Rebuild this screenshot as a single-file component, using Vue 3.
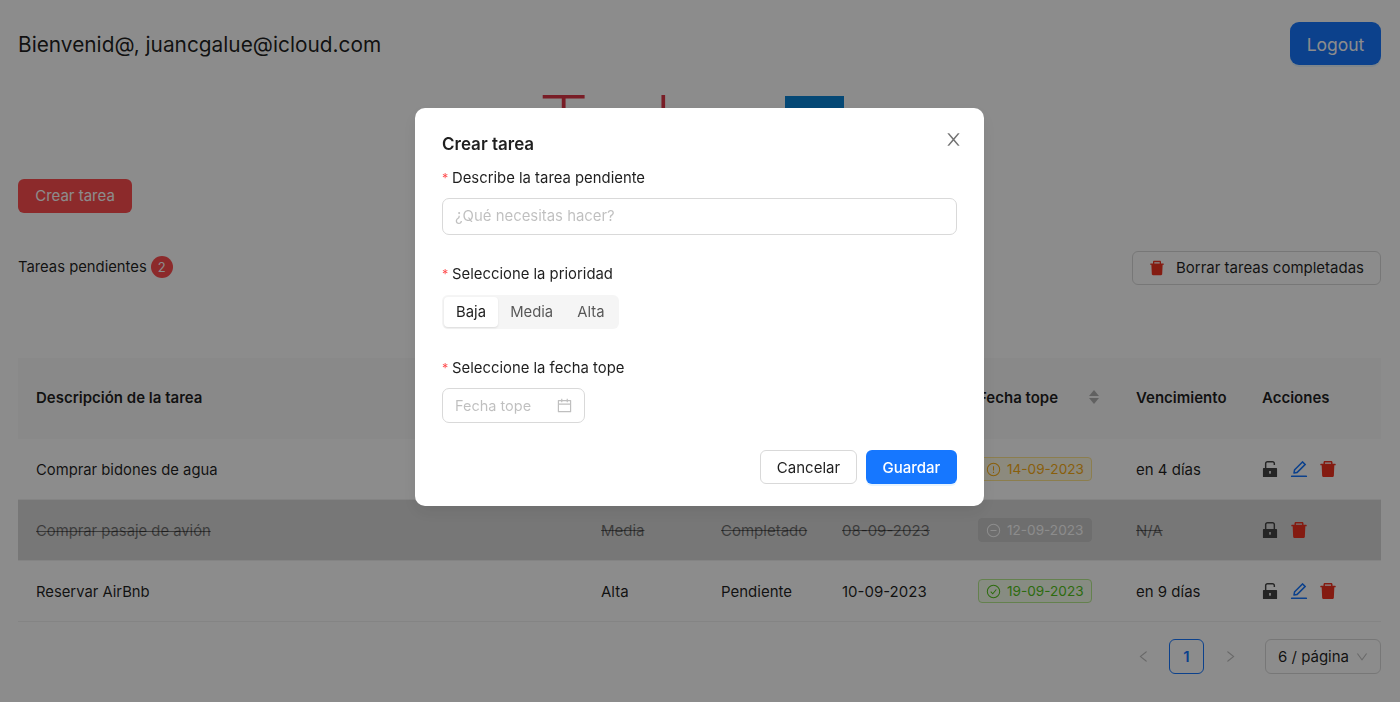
<script setup>
import { ref } from 'vue'

const icons = {
  del: 'M864 256H736v-80c0-35.3-28.7-64-64-64H352c-35.3 0-64 28.7-64 64v80H160c-17.7 0-32 14.3-32 32v32c0 4.4 3.6 8 8 8h60.4l24.7 523c1.6 34.1 29.8 61 63.9 61h454c34.2 0 62.3-26.8 63.9-61l24.7-523H888c4.4 0 8-3.6 8-8v-32c0-17.7-14.3-32-32-32zm-200 0H360v-72h304v72z',
  edit: 'M257.7 752c2 0 4-.2 6-.5L431.9 722c2-.4 3.9-1.3 5.3-2.8l423.9-423.9a9.96 9.96 0 0 0 0-14.1L694.9 114.9c-1.9-1.9-4.4-2.9-7.1-2.9s-5.2 1-7.1 2.9L256.8 538.8c-1.5 1.5-2.4 3.3-2.8 5.3l-29.5 168.2a33.5 33.5 0 0 0 9.4 29.8c6.6 6.4 14.9 9.9 23.8 9.9zm67.4-174.4L687.8 215l73.3 73.3-362.7 362.6-88.9 15.7 15.6-89zM880 836H144c-17.7 0-32 14.3-32 32v36c0 4.4 3.6 8 8 8h784c4.4 0 8-3.6 8-8v-36c0-17.7-14.3-32-32-32z',
  lock: 'M832 464h-68V240c0-70.7-57.3-128-128-128H388c-70.7 0-128 57.3-128 128v224h-68c-17.7 0-32 14.3-32 32v384c0 17.7 14.3 32 32 32h640c17.7 0 32-14.3 32-32V496c0-17.7-14.3-32-32-32zM540 701v53c0 4.4-3.6 8-8 8h-40c-4.4 0-8-3.6-8-8v-53a48.01 48.01 0 1 1 56 0zm152-237H332V240c0-30.9 25.1-56 56-56h248c30.9 0 56 25.1 56 56v224z',
  unlock: 'M832 464H332V240c0-30.9 25.1-56 56-56h248c30.9 0 56 25.1 56 56v68c0 4.4 3.6 8 8 8h56c4.4 0 8-3.6 8-8v-68c0-70.7-57.3-128-128-128H388c-70.7 0-128 57.3-128 128v224h-68c-17.7 0-32 14.3-32 32v384c0 17.7 14.3 32 32 32h640c17.7 0 32-14.3 32-32V496c0-17.7-14.3-32-32-32zM540 701v53c0 4.4-3.6 8-8 8h-40c-4.4 0-8-3.6-8-8v-53a48.01 48.01 0 1 1 56 0z',
  calendar: 'M880 184H712v-64c0-4.4-3.6-8-8-8h-56c-4.4 0-8 3.6-8 8v64H384v-64c0-4.4-3.6-8-8-8h-56c-4.4 0-8 3.6-8 8v64H144c-17.7 0-32 14.3-32 32v664c0 17.7 14.3 32 32 32h736c17.7 0 32-14.3 32-32V216c0-17.7-14.3-32-32-32zm-40 656H184V460h656v380zM184 392V256h128v48c0 4.4 3.6 8 8 8h56c4.4 0 8-3.6 8-8v-48h256v48c0 4.4 3.6 8 8 8h56c4.4 0 8-3.6 8-8v-48h128v136H184z',
  close: 'M563.8 512l262.5-312.9c4.4-5.2.7-13.1-6.1-13.1h-79.8c-4.7 0-9.2 2.1-12.3 5.7L511.6 449.8 295.1 191.7c-3-3.6-7.5-5.7-12.3-5.7H203c-6.8 0-10.5 7.9-6.1 13.1L459.4 512 196.9 824.9A7.95 7.95 0 0 0 203 838h79.8c4.7 0 9.2-2.1 12.3-5.7l216.5-258.1 216.5 258.1c3 3.6 7.5 5.7 12.3 5.7h79.8c6.8 0 10.5-7.9 6.1-13.1L563.8 512z',
  left: 'M724 218.3V141c0-6.7-7.7-10.4-12.9-6.3L260.3 486.8a31.86 31.86 0 0 0 0 50.3l450.8 352.1c5.3 4.1 12.9.4 12.9-6.3v-77.3c0-4.9-2.3-9.6-6.1-12.6l-360-281 360-281.1c3.8-3 6.1-7.7 6.1-12.6z',
  right: 'M765.7 486.8L314.9 134.7A7.97 7.97 0 0 0 302 141v77.3c0 4.9 2.3 9.6 6.1 12.6l360 281.1-360 281.1c-3.9 3-6.1 7.7-6.1 12.6V883c0 6.7 7.7 10.4 12.9 6.3l450.8-352.1a31.96 31.96 0 0 0 0-50.4z',
  down: 'M884 256h-75c-5.1 0-9.9 2.5-12.9 6.6L512 654.2 227.9 262.6c-3-4.1-7.8-6.6-12.9-6.6h-75c-6.5 0-10.3 7.4-6.5 12.7l352.6 486.1c12.8 17.6 39 17.6 51.7 0l352.6-486.1c3.9-5.3.1-12.7-6.4-12.7z'
}

const headers = ['Descripción de la tarea', 'Prioridad', 'Estado', 'Fecha', 'Fecha tope', 'Vencimiento', 'Acciones']

// the first row's middle cells sit behind the modal, so they stay empty
const rows = [
  { id: 1, desc: 'Comprar bidones de agua', prio: '', state: '', date: '', due: '14-09-2023', tag: 'warn', left: 'en 4 días', done: false },
  { id: 2, desc: 'Comprar pasaje de avión', prio: 'Media', state: 'Completado', date: '08-09-2023', due: '12-09-2023', tag: 'off', left: 'N/A', done: true },
  { id: 3, desc: 'Reservar AirBnb', prio: 'Alta', state: 'Pendiente', date: '10-09-2023', due: '19-09-2023', tag: 'ok', left: 'en 9 días', done: false }
]

const priorities = ['Baja', 'Media', 'Alta']
const priority = ref('Baja')
const description = ref('')
</script>

<template>
  <div class="page">
    <header class="top">
      <span class="welcome">Bienvenid@, juancgalue@icloud.com</span>
      <button class="btn-logout">Logout</button>
    </header>

    <h1 class="logo">
      <span class="logo-text">Todo</span>
      <span class="logo-box"></span>
    </h1>

    <div class="create-row">
      <button class="btn-create">Crear tarea</button>
    </div>

    <div class="summary">
      <div class="pending">
        <span>Tareas pendientes</span>
        <span class="badge">2</span>
      </div>
      <button class="btn-clear">
        <svg class="ico red" viewBox="64 64 896 896"><path :d="icons.del" /></svg>
        Borrar tareas completadas
      </button>
    </div>

    <table class="tasks">
      <colgroup>
        <col style="width: 565px" />
        <col style="width: 120px" />
        <col style="width: 121px" />
        <col style="width: 136px" />
        <col style="width: 158px" />
        <col style="width: 126px" />
        <col />
      </colgroup>
      <thead>
        <tr>
          <th v-for="h in headers" :key="h">
            <span class="th-inner">
              {{ h }}
              <span v-if="h === 'Fecha tope'" class="sorter">
                <i class="up"></i>
                <i class="dn"></i>
              </span>
            </span>
          </th>
        </tr>
      </thead>
      <tbody>
        <tr v-for="row in rows" :key="row.id" :class="{ done: row.done }">
          <td><span class="t desc">{{ row.desc }}</span></td>
          <td><span class="t">{{ row.prio }}</span></td>
          <td><span class="t">{{ row.state }}</span></td>
          <td><span class="t">{{ row.date }}</span></td>
          <td>
            <span class="tag" :class="row.tag">
              <svg class="tag-ico" viewBox="0 0 16 16" fill="none" stroke="currentColor" stroke-width="1.1">
                <circle cx="8" cy="8" r="6.6" />
                <path v-if="row.tag === 'warn'" d="M8 4.4v4.6M8 10.4v1.2" />
                <path v-if="row.tag === 'off'" d="M4.8 8h6.4" />
                <path v-if="row.tag === 'ok'" d="M5 8.2l2.2 2.3L11 5.9" />
              </svg>
              {{ row.due }}
            </span>
          </td>
          <td><span class="t">{{ row.left }}</span></td>
          <td>
            <span class="actions">
              <svg class="act dark" viewBox="64 64 896 896"><path :d="row.done ? icons.lock : icons.unlock" /></svg>
              <svg v-if="!row.done" class="act blue" viewBox="64 64 896 896"><path :d="icons.edit" /></svg>
              <svg class="act red" viewBox="64 64 896 896"><path :d="icons.del" /></svg>
            </span>
          </td>
        </tr>
      </tbody>
    </table>

    <nav class="pager">
      <svg class="pg-arrow" viewBox="64 64 896 896"><path :d="icons.left" /></svg>
      <span class="pg-num">1</span>
      <svg class="pg-arrow" viewBox="64 64 896 896"><path :d="icons.right" /></svg>
      <span class="pg-size">
        6 / página
        <svg class="pg-down" viewBox="64 64 896 896"><path :d="icons.down" /></svg>
      </span>
    </nav>

    <div class="mask">
      <section class="modal">
        <div class="modal-head">
          <h2>Crear tarea</h2>
          <svg class="close" viewBox="64 64 896 896"><path :d="icons.close" /></svg>
        </div>

        <label class="lbl"><em>*</em>Describe la tarea pendiente</label>
        <input v-model="description" class="inp" type="text" placeholder="¿Qué necesitas hacer?" />

        <label class="lbl second"><em>*</em>Seleccione la prioridad</label>
        <div class="segmented">
          <span
            v-for="p in priorities"
            :key="p"
            class="seg"
            :class="{ on: priority === p }"
            @click="priority = p"
          >{{ p }}</span>
        </div>

        <label class="lbl third"><em>*</em>Seleccione la fecha tope</label>
        <div class="datepick">
          <span>Fecha tope</span>
          <svg viewBox="64 64 896 896"><path :d="icons.calendar" /></svg>
        </div>

        <div class="modal-foot">
          <button class="btn-cancel">Cancelar</button>
          <button class="btn-save">Guardar</button>
        </div>
      </section>
    </div>
  </div>
</template>

<style scoped>
.page {
  height: 702px;
  overflow: hidden;
  padding: 0 19px 0 18px;
  box-sizing: border-box;
  background: #fff;
  color: rgba(0, 0, 0, 0.88);
  font-family: Inter, "Liberation Sans", sans-serif;
  font-size: 15px;
}

button {
  font-family: inherit;
  cursor: pointer;
}

.top {
  display: flex;
  justify-content: space-between;
  align-items: center;
  padding-top: 22px;
  height: 43px;
}

.welcome {
  padding-top: 2px;
  font-size: 20.85px;
}

.btn-logout {
  width: 91px;
  height: 43px;
  padding: 2px 0 0;
  border: 0;
  border-radius: 9px;
  background: #1677ff;
  color: #fff;
  font-size: 17.5px;
  box-shadow: 0 2px 0 rgba(5, 145, 255, 0.1);
}

.logo {
  display: flex;
  justify-content: center;
  align-items: flex-start;
  height: 114px;
  margin: 0;
  padding-right: 14px;
}

.logo-text {
  width: 244px;
  margin-top: 21px;
  text-indent: -3px;
  font-size: 82px;
  line-height: 80px;
  font-weight: 200;
  letter-spacing: -3.5px;
  color: #dc3545;
}

.logo-box {
  width: 59px;
  height: 59px;
  margin-top: 31px;
  background: #0a84d6;
}

.create-row {
  height: 72px;
}

.btn-create {
  width: 114px;
  height: 34px;
  padding: 0 0 2px;
  border: 0;
  border-radius: 6px;
  background: #ff4d4f;
  color: #fff;
  font-size: 15px;
}

.summary {
  display: flex;
  justify-content: space-between;
  align-items: flex-start;
  height: 107px;
}

.pending {
  display: flex;
  align-items: center;
  gap: 4px;
  height: 32px;
  font-size: 14.8px;
}

.pending span:first-child {
  margin-top: -1px;
}

.badge {
  width: 22px;
  height: 22px;
  border-radius: 50%;
  background: #ff4d4f;
  color: #fff;
  font-size: 13px;
  text-align: center;
  line-height: 22px;
}

.btn-clear {
  display: flex;
  align-items: center;
  justify-content: center;
  gap: 11px;
  width: 249px;
  height: 34px;
  padding: 0 0 1px;
  border: 1px solid #d9d9d9;
  border-radius: 6px;
  background: #fff;
  color: rgba(0, 0, 0, 0.88);
  font-size: 15px;
}

.ico {
  width: 16px;
  height: 16px;
}

.red {
  fill: #f0321f;
}

.dark {
  fill: #444;
}

.blue {
  fill: #1677ff;
}

.tasks {
  width: 100%;
  table-layout: fixed;
  border-collapse: collapse;
}

.tasks th {
  height: 78px;
  padding: 0 18px 3px;
  background: #fafafa;
  text-align: left;
  font-weight: 600;
}

.th-inner {
  display: flex;
  align-items: center;
  justify-content: space-between;
}

.sorter {
  display: flex;
  flex-direction: column;
  gap: 2px;
  margin-right: 1px;
}

.sorter i {
  width: 0;
  height: 0;
  border-left: 5px solid transparent;
  border-right: 5px solid transparent;
}

.sorter .up {
  border-bottom: 6px solid rgba(0, 0, 0, 0.29);
}

.sorter .dn {
  border-top: 6px solid rgba(0, 0, 0, 0.29);
}

.tasks td {
  height: 60px;
  padding: 0 18px;
  border-bottom: 1px solid #f0f0f0;
  white-space: nowrap;
}

.t.desc {
  font-size: 14.8px;
}

.tasks tr.done td {
  background: #d9d9d9;
}

.tasks tr.done .t {
  color: rgba(0, 0, 0, 0.5);
  text-decoration: line-through;
}

.tag {
  display: inline-flex;
  align-items: center;
  gap: 6px;
  width: 114px;
  height: 24px;
  padding-left: 7px;
  box-sizing: border-box;
  border: 1px solid;
  border-radius: 4px;
  font-size: 13.6px;
  vertical-align: middle;
}

.tag-ico {
  width: 15px;
  height: 15px;
  flex: none;
}

.tag.warn {
  color: #faad14;
  background: #fffbe6;
  border-color: #ffe58f;
}

.tag.off {
  color: #fff;
  background: #c8c8c8;
  border-color: #c8c8c8;
}

.tag.ok {
  color: #52c41a;
  background: #f6ffed;
  border-color: #b7eb8f;
}

.actions {
  display: flex;
  align-items: center;
  gap: 11px;
  margin-left: -1px;
}

.act {
  width: 18px;
  height: 18px;
}

.pager {
  display: flex;
  justify-content: flex-end;
  align-items: center;
  margin-top: 17px;
}

.pg-arrow {
  width: 13px;
  height: 13px;
  fill: rgba(0, 0, 0, 0.25);
}

.pg-num {
  width: 35px;
  height: 35px;
  margin: 0 19.5px;
  box-sizing: border-box;
  border: 1px solid #1677ff;
  border-radius: 6px;
  color: #1677ff;
  font-weight: 600;
  text-align: center;
  line-height: 33px;
}

.pg-size {
  display: flex;
  align-items: center;
  justify-content: space-between;
  width: 116px;
  height: 35px;
  margin-left: 28.5px;
  padding: 0 12px;
  box-sizing: border-box;
  border: 1px solid #d9d9d9;
  border-radius: 6px;
}

.pg-down {
  width: 12px;
  height: 12px;
  fill: rgba(0, 0, 0, 0.25);
}

.mask {
  position: fixed;
  inset: 0;
  background: rgba(0, 0, 0, 0.45);
}

.modal {
  display: flex;
  flex-direction: column;
  align-items: flex-start;
  width: 569px;
  height: 398px;
  margin: 108px 0 0 415px;
  padding: 0 27px;
  box-sizing: border-box;
  background: #fff;
  border-radius: 10px;
  box-shadow: 0 6px 16px rgba(0, 0, 0, 0.08);
}

.modal-head {
  display: flex;
  justify-content: space-between;
  width: 100%;
  height: 58px;
}

.modal-head h2 {
  margin: 25px 0 0;
  font-size: 17px;
  line-height: 22px;
  font-weight: 600;
}

.close {
  flex: none;
  width: 17px;
  height: 17px;
  margin: 22.5px -4.5px 0 0;
  fill: rgba(0, 0, 0, 0.55);
}

.lbl {
  height: 22px;
  line-height: 24px;
  font-size: 14.85px;
}

.lbl em {
  display: inline-block;
  width: 10px;
  font-size: 12.5px;
  color: #ff4d4f;
  font-style: normal;
}

.lbl.second {
  margin-top: 27px;
}

.lbl.third {
  margin-top: 27px;
}

.inp {
  width: 100%;
  height: 37px;
  margin-top: 10px;
  padding: 0 12px 2px;
  box-sizing: border-box;
  border: 1px solid #d9d9d9;
  border-radius: 7px;
  outline: none;
  font: inherit;
  font-size: 14.9px;
}

.inp::placeholder {
  color: rgba(0, 0, 0, 0.25);
}

.segmented {
  display: flex;
  height: 34px;
  margin-top: 11px;
  padding: 2px;
  box-sizing: border-box;
  background: #f5f5f5;
  border-radius: 6px;
  font-size: 14.8px;
}

.seg {
  padding: 0 12.1px;
  line-height: 30px;
  border-radius: 4px;
  color: rgba(0, 0, 0, 0.65);
  cursor: pointer;
}

.seg.on {
  background: #fff;
  color: rgba(0, 0, 0, 0.88);
  box-shadow: 0 1px 2px rgba(0, 0, 0, 0.1);
}

.datepick {
  display: flex;
  align-items: center;
  justify-content: space-between;
  width: 143px;
  height: 35px;
  margin-top: 10px;
  padding: 0 12px;
  box-sizing: border-box;
  border: 1px solid #d9d9d9;
  border-radius: 7px;
  color: rgba(0, 0, 0, 0.25);
  font-size: 14.5px;
}

.datepick svg {
  width: 15px;
  height: 15px;
  fill: rgba(0, 0, 0, 0.25);
}

.modal-foot {
  display: flex;
  justify-content: flex-end;
  gap: 9px;
  width: 100%;
  margin-top: 27px;
}

.btn-cancel,
.btn-save {
  height: 34px;
  border-radius: 6px;
  font-size: 15px;
}

.btn-cancel {
  width: 97px;
  border: 1px solid #d9d9d9;
  background: #fff;
  color: rgba(0, 0, 0, 0.88);
}

.btn-save {
  width: 91px;
  border: 0;
  background: #1677ff;
  color: #fff;
  font-weight: 500;
  box-shadow: 0 2px 0 rgba(5, 145, 255, 0.1);
}
</style>
